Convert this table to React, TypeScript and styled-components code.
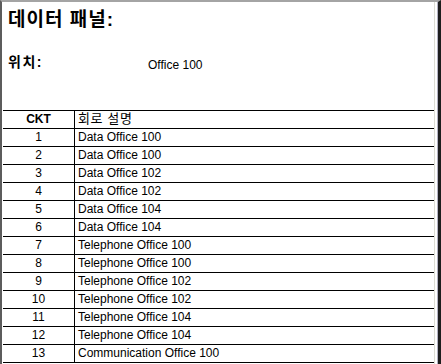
import React from "react";
import styled, { createGlobalStyle } from "styled-components";

const Global = createGlobalStyle`
  html, body { margin: 0; padding: 0; background: #ffffff; }
  body { font-family: "Liberation Sans", "Noto Sans CJK KR", Arial, sans-serif; color: #000; }
`;

const Frame = styled.div`
  box-sizing: border-box;
  width: 441px;
  height: 364px;
  overflow: hidden;
  background: #fff;
  border-left: 2px solid #5c5c5c;
  border-top: 2px solid #a4a4a4;
  border-right: 3px solid #1e1e1e;
  box-shadow: inset -1px 0 0 #b4b4c4, inset -3px 0 0 #ffffff, inset -4px 0 0 #dcdcd4;
  padding: 0 4px 0 1px;
  display: flex;
  flex-direction: column;
`;

const Header = styled.div`
  height: 108px;
  padding-left: 5px;
  display: flex;
  flex-direction: column;
`;

const Title = styled.h1`
  margin: 6px 0 0;
  font-size: 19px;
  line-height: 24px;
  font-weight: bold;
  letter-spacing: 1px;
`;

const LocationRow = styled.div`
  margin-top: 21px;
  display: flex;
  align-items: baseline;
`;

const LocationLabel = styled.span`
  width: 140px;
  font-size: 14px;
  font-weight: bold;
  line-height: 18px;
  letter-spacing: 1.5px;
`;

const LocationValue = styled.span`
  font-size: 12px;
  position: relative;
  top: 2px;
`;

const Table = styled.div`
  border-bottom: 1px solid #000;
`;

const Row = styled.div`
  display: grid;
  grid-template-columns: 71px 1fr;
  height: 18px;
  box-sizing: border-box;
  border-top: 1px solid #000;
`;

const NumCell = styled.div<{ $head?: boolean }>`
  display: flex;
  align-items: center;
  justify-content: center;
  padding-bottom: 1px;
  font-size: 12px;
  line-height: 16px;
  font-weight: ${(p) => (p.$head ? "bold" : "normal")};
`;

const TextCell = styled.div<{ $head?: boolean }>`
  display: flex;
  align-items: center;
  border-left: 1px solid #000;
  padding-left: 3px;
  padding-bottom: 1px;
  font-size: ${(p) => (p.$head ? "13px" : "12px")};
  letter-spacing: ${(p) => (p.$head ? "0.6px" : "normal")};
  line-height: 16px;
  white-space: nowrap;
`;

const rows = [
  "Data Office 100",
  "Data Office 100",
  "Data Office 102",
  "Data Office 102",
  "Data Office 104",
  "Data Office 104",
  "Telephone Office 100",
  "Telephone Office 100",
  "Telephone Office 102",
  "Telephone Office 102",
  "Telephone Office 104",
  "Telephone Office 104",
  "Communication Office 100",
];

export default function App() {
  return (
    <>
      <Global />
      <Frame>
        <Header>
          <Title>데이터 패널:</Title>
          <LocationRow>
            <LocationLabel>위치:</LocationLabel>
            <LocationValue>Office 100</LocationValue>
          </LocationRow>
        </Header>
        <Table>
          <Row>
            <NumCell $head>CKT</NumCell>
            <TextCell $head>회로 설명</TextCell>
          </Row>
          {rows.map((r, i) => (
            <Row key={i}>
              <NumCell>{i + 1}</NumCell>
              <TextCell>{r}</TextCell>
            </Row>
          ))}
        </Table>
      </Frame>
    </>
  );
}
